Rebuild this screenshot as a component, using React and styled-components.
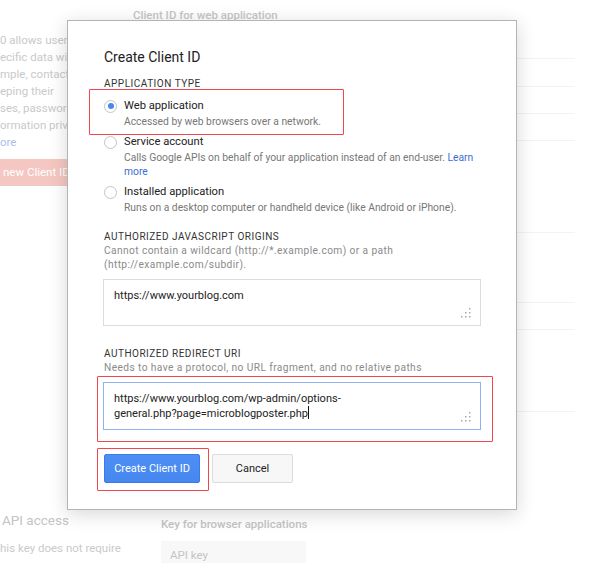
import React from "react";
import styled, { createGlobalStyle } from "styled-components";

const Global = createGlobalStyle`
  html, body { margin: 0; padding: 0; background: #fff; }
  body { font-family: Roboto, "Liberation Sans", Arial, sans-serif; }
  * { box-sizing: border-box; }
`;

const Page = styled.div`
  position: relative;
  width: 600px;
  height: 563px;
  overflow: hidden;
  background: #fff;
  color: #c8c8c8;
`;

/* ---------- faded background page ---------- */
const TopArea = styled.div`
  display: grid;
  grid-template-columns: 133px 442px;
  height: 505px;
`;

const Intro = styled.div`
  padding-top: 32px;
  width: 67px;
  overflow: hidden;
`;

const IntroLine = styled.div`
  font-size: 11.5px;
  line-height: 17px;
  white-space: nowrap;
  color: ${(p) => (p.$link ? "#aac0ee" : "#c9c9c9")};
`;

const PinkButton = styled.div`
  margin-top: 8px;
  width: 90px;
  height: 27px;
  background: #f5c7c2;
  color: #fff;
  font-size: 11.5px;
  line-height: 27px;
  padding-left: 3px;
  white-space: nowrap;
`;

const MainCol = styled.div`
  padding-top: 8px;
`;

const BgHeading = styled.div`
  font-size: 11.5px;
  line-height: 14px;
  font-weight: 500;
  color: #c6c6c6;
`;

const BgRows = styled.div`
  margin-top: 10px;
`;

const BgRow = styled.div`
  height: ${(p) => p.$h || 27}px;
  border-bottom: 1px solid #f3f3f3;
`;

const BottomArea = styled.div`
  display: grid;
  grid-template-columns: 161px 1fr;
  padding-top: 7px;
`;

const ApiTitle = styled.div`
  font-size: 13.5px;
  line-height: 16px;
  padding-left: 2px;
  color: #c4c4c4;
`;

const ApiText = styled.div`
  margin-top: 12px;
  font-size: 11.5px;
  line-height: 16px;
  white-space: nowrap;
  color: #cacaca;
`;

const KeyTitle = styled.div`
  margin-top: 5px;
  font-size: 11.5px;
  line-height: 14px;
  font-weight: 500;
  color: #c4c4c4;
`;

const KeyBox = styled.div`
  margin-top: 10px;
  width: 145px;
  height: 30px;
  background: #f8f8f8;
  font-size: 11.5px;
  line-height: 28px;
  padding-left: 9px;
  color: #c4c4c4;
`;

/* ---------- dialog ---------- */
const Dialog = styled.div`
  position: absolute;
  left: 67px;
  top: 20px;
  width: 450px;
  height: 490px;
  background: #fff;
  border: 1px solid #b4b4b4;
  box-shadow: 0 4px 18px rgba(0, 0, 0, 0.16);
  padding: 27px 36px 0 36px;
  color: #222;
`;

const Title = styled.h2`
  margin: 0;
  font-size: 14px;
  line-height: 18px;
  font-weight: 400;
  color: #222;
`;

const SectionLabel = styled.div`
  margin-top: ${(p) => p.$mt}px;
  font-size: 10px;
  line-height: 14px;
  letter-spacing: 0.5px;
  color: #333;
`;

const Hint = styled.div`
  font-size: 10.2px;
  line-height: 14px;
  letter-spacing: 0.4px;
  color: #8a8a8a;
  white-space: nowrap;
`;

const Options = styled.div`
  margin-top: 7px;
  display: flex;
  flex-direction: column;
  gap: 5px;
`;

const Option = styled.div`
  position: relative;
  display: grid;
  grid-template-columns: 13px 1fr;
  column-gap: 7px;
  align-items: center;
`;

const Radio = styled.span`
  width: 13px;
  height: 13px;
  border-radius: 50%;
  border: 1px solid #c4c4c4;
  background: #fff;
  display: flex;
  align-items: center;
  justify-content: center;
  &::after {
    content: "";
    width: 6px;
    height: 6px;
    border-radius: 50%;
    background: ${(p) => (p.$checked ? "#4a86f0" : "transparent")};
  }
`;

const OptionLabel = styled.div`
  font-size: 11.2px;
  line-height: 16px;
  color: #222;
`;

const OptionDesc = styled.div`
  grid-column: 2;
  margin-top: 1px;
  font-size: 10.3px;
  line-height: 14px;
  color: #777;
  white-space: nowrap;
`;

const Link = styled.a`
  color: #3b6fd9;
  text-decoration: none;
`;

const Marked = styled.div`
  position: relative;
  &::after {
    content: "";
    position: absolute;
    pointer-events: none;
    top: ${(p) => p.$top}px;
    left: ${(p) => p.$left}px;
    width: ${(p) => p.$w}px;
    height: ${(p) => p.$h}px;
    border: 1.5px solid #f0474e;
    border-radius: 1px;
  }
`;

const Field = styled.div`
  position: relative;
  margin-top: ${(p) => p.$mt}px;
  margin-left: -1px;
  width: 378px;
  height: ${(p) => p.$h}px;
  border: 1px solid ${(p) => (p.$focus ? "#8fb2f3" : "#dcdcdc")};
  padding: 8px 10px;
  font-size: 11px;
  line-height: 15px;
  color: #222;
`;

const Caret = styled.span`
  display: inline-block;
  width: 1px;
  height: 13px;
  background: #111;
  vertical-align: -2px;
`;

const Grip = styled.svg`
  position: absolute;
  right: 9px;
  bottom: 7px;
`;

const Buttons = styled.div`
  margin-top: 24px;
  display: flex;
  gap: 12px;
`;

const PrimaryButton = styled.button`
  display: block;
  width: 96px;
  height: 29px;
  border: 1px solid #3b7be8;
  border-radius: 2px;
  background: linear-gradient(#4d8ff5, #4687f0);
  color: #fff;
  font-family: inherit;
  font-size: 11px;
  padding: 0;
`;

const SecondaryButton = styled.button`
  width: 81px;
  height: 29px;
  border: 1px solid #dcdcdc;
  border-radius: 2px;
  background: #f7f7f7;
  color: #222;
  font-family: inherit;
  font-size: 11px;
  padding: 0;
`;

const GripIcon = () => (
  <Grip width="10" height="10" viewBox="0 0 10 10">
    <g fill="#a9a9a9">
      <rect x="8" y="0" width="1.5" height="1.5" />
      <rect x="8" y="4" width="1.5" height="1.5" />
      <rect x="8" y="8" width="1.5" height="1.5" />
      <rect x="4" y="4" width="1.5" height="1.5" />
      <rect x="4" y="8" width="1.5" height="1.5" />
      <rect x="0" y="8" width="1.5" height="1.5" />
    </g>
  </Grip>
);

const introLines = [
  "0 allows users",
  "ecific data wi",
  "mple, contact l",
  "eping their",
  "ses, password",
  "ormation priva",
];

export default function App() {
  return (
    <Page>
      <Global />
      <TopArea>
        <Intro>
          {introLines.map((l) => (
            <IntroLine key={l}>{l}</IntroLine>
          ))}
          <IntroLine $link>ore</IntroLine>
          <PinkButton>new Client ID</PinkButton>
        </Intro>
        <MainCol>
          <BgHeading>Client ID for web application</BgHeading>
          <BgRows>
            <BgRow />
            <BgRow $h={28} />
            <BgRow />
            <BgRow />
            <BgRow $h={92} />
            <BgRow $h={70} />
            <BgRow $h={27} />
            <BgRow $h={82} />
          </BgRows>
        </MainCol>
      </TopArea>
      <BottomArea>
        <div>
          <ApiTitle>API access</ApiTitle>
          <ApiText>his key does not require</ApiText>
        </div>
        <div>
          <KeyTitle>Key for browser applications</KeyTitle>
          <KeyBox>API key</KeyBox>
        </div>
      </BottomArea>

      <Dialog>
        <Title>Create Client ID</Title>
        <SectionLabel $mt={11}>APPLICATION TYPE</SectionLabel>
        <Options>
          <Marked $top={-9} $left={-15} $w={253} $h={44}>
            <Option>
              <Radio $checked />
              <OptionLabel>Web application</OptionLabel>
              <OptionDesc>Accessed by web browsers over a network.</OptionDesc>
            </Option>
          </Marked>
          <Option>
            <Radio />
            <OptionLabel>Service account</OptionLabel>
            <OptionDesc>
              Calls Google APIs on behalf of your application instead of an
              end-user. <Link href="#">Learn<br />more</Link>
            </OptionDesc>
          </Option>
          <Option>
            <Radio />
            <OptionLabel>Installed application</OptionLabel>
            <OptionDesc>
              Runs on a desktop computer or handheld device (like Android or
              iPhone).
            </OptionDesc>
          </Option>
        </Options>

        <SectionLabel $mt={15}>AUTHORIZED JAVASCRIPT ORIGINS</SectionLabel>
        <Hint>
          Cannot contain a wildcard (http://*.example.com) or a path
          <br />
          (http://example.com/subdir).
        </Hint>
        <Field $mt={7} $h={47}>
          https://www.yourblog.com
          <GripIcon />
        </Field>

        <SectionLabel $mt={21}>AUTHORIZED REDIRECT URI</SectionLabel>
        <Hint>Needs to have a protocol, no URL fragment, and no relative paths</Hint>
        <Marked $top={-6} $left={-7} $w={394} $h={64}>
          <Field $mt={7} $h={48} $focus>
            https://www.yourblog.com/wp-admin/options-
            <br />
            general.php?page=microblogposter.php
            <Caret />
            <GripIcon />
          </Field>
        </Marked>

        <Buttons>
          <Marked $top={-6} $left={-7} $w={110} $h={41}>
            <PrimaryButton>Create Client ID</PrimaryButton>
          </Marked>
          <SecondaryButton>Cancel</SecondaryButton>
        </Buttons>
      </Dialog>
    </Page>
  );
}
